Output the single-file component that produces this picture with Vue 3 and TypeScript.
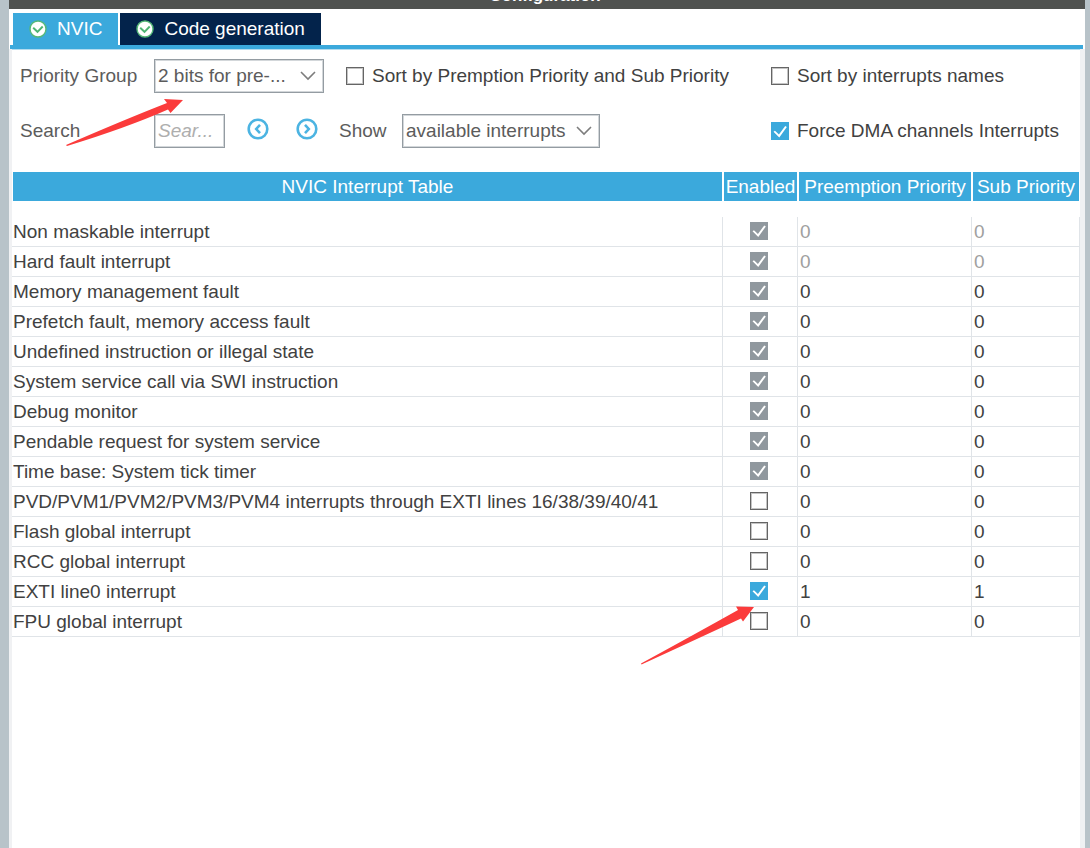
<script setup lang="ts">
import { ref } from 'vue'

interface Interrupt {
  name: string
  enabled: boolean
  locked: boolean
  fixedPriority: boolean
  preemption: number
  sub: number
}

const tabs = ['NVIC', 'Code generation']
const activeTab = ref('NVIC')
const priorityGroup = ref('2 bits for pre-...')
const shown = ref('available interrupts')
const search = ref('')
const sortByPriority = ref(false)
const sortByName = ref(false)
const forceDma = ref(true)

function entry(name: string, enabled: boolean, locked: boolean, fixedPriority = false, preemption = 0, sub = 0): Interrupt {
  return { name, enabled, locked, fixedPriority, preemption, sub }
}

const interrupts = ref<Interrupt[]>([
  entry('Non maskable interrupt', true, true, true),
  entry('Hard fault interrupt', true, true, true),
  entry('Memory management fault', true, true),
  entry('Prefetch fault, memory access fault', true, true),
  entry('Undefined instruction or illegal state', true, true),
  entry('System service call via SWI instruction', true, true),
  entry('Debug monitor', true, true),
  entry('Pendable request for system service', true, true),
  entry('Time base: System tick timer', true, true),
  entry('PVD/PVM1/PVM2/PVM3/PVM4 interrupts through EXTI lines 16/38/39/40/41', false, false),
  entry('Flash global interrupt', false, false),
  entry('RCC global interrupt', false, false),
  entry('EXTI line0 interrupt', true, false, false, 1, 1),
  entry('FPU global interrupt', false, false),
])
</script>

<template>
  <div class="window">
    <header class="title">Configuration</header>
    <main class="panel">
      <nav class="tabs">
        <button
          v-for="tab in tabs"
          :key="tab"
          type="button"
          class="tab"
          :class="{ active: tab === activeTab }"
          @click="activeTab = tab"
        >
          <svg class="tab-icon" viewBox="0 0 18 18" aria-hidden="true">
            <circle cx="9" cy="9" r="8" fill="#fff" stroke="#55b878" stroke-width="1.4" />
            <path d="M4.200 7.800l4.300 4 5.200-5.300" fill="none" stroke="#4fb573" stroke-width="1.900" />
          </svg>
          <span>{{ tab }}</span>
        </button>
      </nav>

      <div class="content">
        <form class="toolbar" @submit.prevent>
          <label for="group">Priority Group</label>
          <div class="controls">
            <div class="select group">
              <select id="group" v-model="priorityGroup">
                <option>2 bits for pre-...</option>
              </select>
              <svg class="chevron" viewBox="0 0 16 10" aria-hidden="true"><path d="M1 1l7 7 7-7" /></svg>
              <svg class="arrow arrow-group" viewBox="0 0 118 48" aria-hidden="true">
                <path d="M117 2L98 1l3 4Q60 21 0 47l1 1Q60 30 102 11.500l2.500 3.500z" />
              </svg>
            </div>
            <label class="check"><input v-model="sortByPriority" type="checkbox" />Sort by Premption Priority and Sub Priority</label>
          </div>
          <label class="check"><input v-model="sortByName" type="checkbox" />Sort by interrupts names</label>

          <label for="search">Search</label>
          <div class="controls">
            <input id="search" v-model="search" class="search" type="text" placeholder="Sear..." />
            <div class="steps">
              <button type="button" class="step" aria-label="Previous">
                <svg viewBox="0 0 22 22" aria-hidden="true">
                  <circle cx="11" cy="11" r="9.300" /><path d="M13 6.800L9.200 11l3.800 4.200" />
                </svg>
              </button>
              <button type="button" class="step" aria-label="Next">
                <svg viewBox="0 0 22 22" aria-hidden="true">
                  <circle cx="11" cy="11" r="9.300" /><path d="M9 6.800L12.800 11 9 15.200" />
                </svg>
              </button>
            </div>
            <label for="show" class="show-label">Show</label>
            <div class="select show">
              <select id="show" v-model="shown">
                <option>available interrupts</option>
              </select>
              <svg class="chevron" viewBox="0 0 16 10" aria-hidden="true"><path d="M1 1l7 7 7-7" /></svg>
            </div>
          </div>
          <label class="check"><input v-model="forceDma" type="checkbox" />Force DMA channels Interrupts</label>
        </form>

        <table>
          <colgroup>
            <col />
            <col class="col-enabled" />
            <col class="col-preemption" />
            <col class="col-sub" />
          </colgroup>
          <thead>
            <tr>
              <th scope="col">NVIC Interrupt Table</th>
              <th scope="col">Enabled</th>
              <th scope="col">Preemption Priority</th>
              <th scope="col">Sub Priority</th>
            </tr>
          </thead>
          <tbody>
            <tr v-for="(row, i) in interrupts" :key="row.name">
              <td>{{ row.name }}</td>
              <td class="enabled">
                <input v-model="row.enabled" type="checkbox" :disabled="row.locked" :aria-label="row.name" />
                <svg v-if="i === 12" class="arrow arrow-row" viewBox="0 0 114 59" aria-hidden="true">
                  <path d="M113 1L95 .5l2 3.500Q56 27 0 57.500l.5 1Q56 33 100 12.500l2 3z" />
                </svg>
              </td>
              <td :class="{ muted: row.fixedPriority }">{{ row.preemption }}</td>
              <td :class="{ muted: row.fixedPriority }">{{ row.sub }}</td>
            </tr>
          </tbody>
        </table>
      </div>
    </main>
  </div>
</template>

<style>
body {
  margin: 0;
}
</style>

<style scoped>
.window {
  box-sizing: border-box;
  min-height: 100vh;
  display: flex;
  flex-direction: column;
  border-left: 9px solid #b8c3c9;
  border-right: 5px solid #b8c3c9;
  background: #fff;
  color: #414141;
  font: 19px/24px "Liberation Sans", Arial, sans-serif;
}
.window *,
.window *::after {
  box-sizing: border-box;
}
.title {
  height: 9px;
  padding: 0 4px 3px 0;
  display: flex;
  align-items: flex-end;
  justify-content: center;
  overflow: hidden;
  background: #505250;
  color: #fff;
  font-size: 17px;
  font-weight: 700;
  line-height: 20px;
}
.panel {
  flex: 1;
  display: flex;
  flex-direction: column;
}
.tabs {
  display: flex;
  gap: 2px;
  margin: 4px 2px 0 1px;
  padding-left: 3px;
  border-bottom: 4px solid #3ba9dc;
  box-shadow: 0 1px 0 #b5dcef;
}
.tab {
  height: 32px;
  display: flex;
  align-items: center;
  gap: 10px;
  padding: 0 16px;
  border: 0;
  background: #03234b;
  color: #fff;
  font: inherit;
}
.tab.active {
  background: #3ba9dc;
}
.tab-icon {
  width: 18px;
  height: 18px;
}
.content {
  flex: 1;
  border-left: 3px solid #f0f1f3;
  border-right: 5px solid #eff1f3;
}
.toolbar {
  display: grid;
  grid-template-columns: 134px 1fr 309px;
  grid-auto-rows: 34px;
  row-gap: 21px;
  align-items: center;
  padding: 10px 0 24px 8px;
  color: #5c5c5c;
  white-space: nowrap;
}
.controls {
  display: flex;
  align-items: center;
}
.check {
  display: flex;
  align-items: center;
  gap: 8px;
  color: #414141;
}
input[type="checkbox"] {
  appearance: none;
  display: block;
  flex: none;
  width: 18px;
  height: 18px;
  margin: 0;
  border: 1px solid #656565;
  background: #fff;
  box-shadow: inset 0 0 0 1px #c4c4c4;
}
input[type="checkbox"]:checked {
  border: 0;
  background: #3ba9dc;
  box-shadow: none;
}
input[type="checkbox"]:disabled {
  background: #90989e;
}
input[type="checkbox"]:checked::after {
  content: "";
  display: block;
  width: 18px;
  height: 18px;
  background: #fff;
  clip-path: polygon(14% 54%, 22% 48%, 44% 70%, 79% 22%, 88% 28%, 46% 86%);
}
.select {
  position: relative;
}
.group {
  width: 170px;
  margin-right: 22px;
}
.show {
  width: 198px;
}
select,
.search {
  height: 34px;
  border: 1px solid #949ca2;
  border-radius: 0;
  background: #fff;
  box-shadow: inset 0 0 0 1px #d3d7da;
  color: #5c5c5c;
  font: inherit;
}
select {
  appearance: none;
  display: block;
  width: 100%;
  padding: 0 28px 0 3px;
}
.chevron {
  position: absolute;
  top: 12px;
  right: 8px;
  width: 16px;
  height: 10px;
  fill: none;
  stroke: #7d7d7d;
  stroke-width: 1.600;
  pointer-events: none;
}
.search {
  width: 71px;
  padding: 0 3px;
}
.search::placeholder {
  color: #aeaeae;
  font-style: italic;
}
.steps {
  display: flex;
  gap: 27px;
  margin: 0 21px 0 22px;
  padding-bottom: 4px;
}
.step {
  width: 22px;
  height: 22px;
  padding: 0;
  border: 0;
  background: none;
}
.step svg {
  display: block;
  fill: none;
  stroke: #4cb4e2;
  stroke-width: 2.600;
}
.show-label {
  width: 63px;
}
.arrow {
  position: absolute;
  z-index: 1;
  fill: #fb3b3b;
  pointer-events: none;
}
.arrow-group {
  top: 39px;
  right: 140px;
  width: 118px;
  height: 48px;
}
.arrow-row {
  top: 29px;
  right: 42px;
  width: 114px;
  height: 59px;
}
table {
  width: 100%;
  table-layout: fixed;
  border-collapse: separate;
  border-spacing: 0;
}
.col-enabled {
  width: 75px;
}
.col-preemption {
  width: 174px;
}
.col-sub {
  width: 108px;
}
th {
  height: 45px;
  padding: 0;
  border: solid #fff;
  border-width: 0 1px 16px 1px;
  background: #3ba9dc;
  background-clip: padding-box;
  color: #fff;
  font-weight: 400;
  white-space: nowrap;
}
td {
  height: 30px;
  padding: 0 2px;
  border-right: 1px solid #e0e4e8;
  border-bottom: 1px solid #e0e4e8;
  white-space: nowrap;
}
td:first-child {
  padding-left: 1px;
}
td.enabled {
  position: relative;
  padding: 0 4px 2px 2px;
}
td.enabled input {
  margin: 0 auto;
}
.muted {
  color: #a0a0a0;
}
</style>
